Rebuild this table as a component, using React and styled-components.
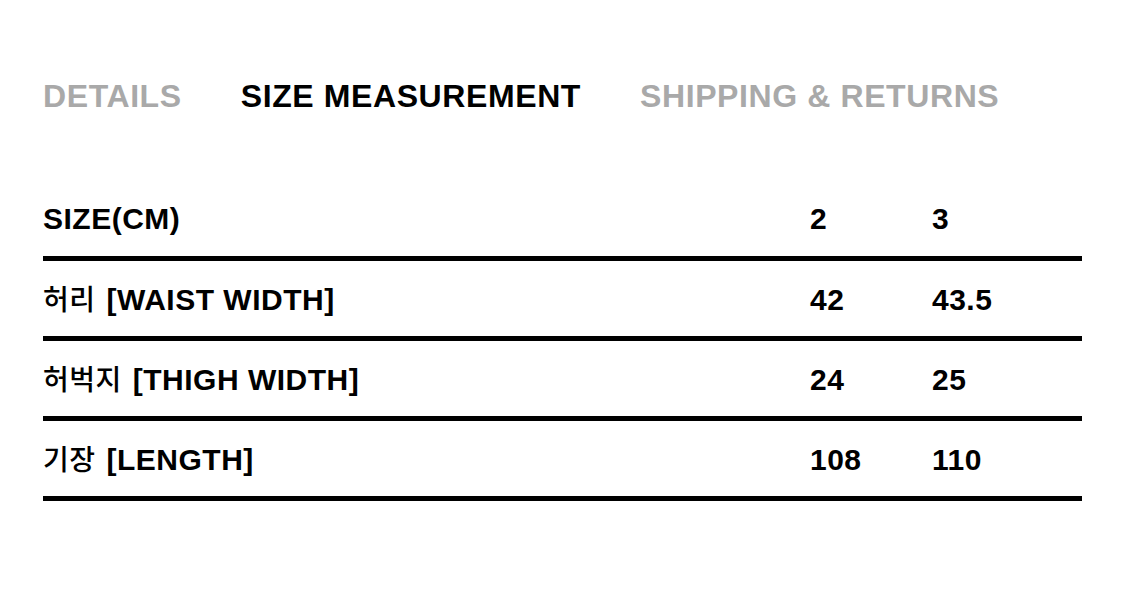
import React from 'react';
import styled, { createGlobalStyle } from 'styled-components';

const GlobalStyle = createGlobalStyle`
  html, body {
    margin: 0;
    padding: 0;
    background: #fff;
  }
  body {
    font-family: 'Liberation Sans', 'Noto Sans CJK KR', Arial, sans-serif;
    color: #000;
  }
`;

const Page = styled.div`
  width: 1039px;
  padding: 76px 0 0 43px;
`;

const Tabs = styled.nav`
  display: flex;
  gap: 59px;
  height: 40px;
  margin-bottom: 65px;
`;

const Tab = styled.span`
  font-size: 32px;
  line-height: 40px;
  font-weight: 700;
  letter-spacing: 0.6px;
  color: ${({ active }) => (active ? '#000' : '#a9a9a9')};
  white-space: nowrap;
`;

const Table = styled.div`
  display: flex;
  flex-direction: column;
`;

const Row = styled.div`
  display: grid;
  grid-template-columns: 767px 122px 1fr;
  height: 75px;
  align-items: center;
  border-bottom: 5px solid #000;
`;

const Cell = styled.span`
  font-family: 'Liberation Sans', 'Noto Sans CJK KR', sans-serif;
  font-size: 30px;
  line-height: 75px;
  font-weight: 700;
  letter-spacing: 0.5px;
  white-space: nowrap;
`;

const Label = styled.span`
  font-family: 'Noto Sans CJK KR', sans-serif;
  font-weight: 500;
  font-size: 28px;
  letter-spacing: 0.5px;
  margin-right: 11px;
`;

const rows = [
  { ko: '허리', en: '[WAIST WIDTH]', values: ['42', '43.5'] },
  { ko: '허벅지', en: '[THIGH WIDTH]', values: ['24', '25'] },
  { ko: '기장', en: '[LENGTH]', values: ['108', '110'] },
];

const App = () => {
  return (
    <Page>
      <GlobalStyle />
      <Tabs>
        <Tab>DETAILS</Tab>
        <Tab active>SIZE MEASUREMENT</Tab>
        <Tab>SHIPPING &amp; RETURNS</Tab>
      </Tabs>

      <Table>
        <Row>
          <Cell>SIZE(CM)</Cell>
          <Cell>2</Cell>
          <Cell>3</Cell>
        </Row>
        {rows.map((row) => (
          <Row key={row.en}>
            <Cell>
              <Label>{row.ko}</Label>
              {row.en}
            </Cell>
            {row.values.map((v) => (
              <Cell key={v}>{v}</Cell>
            ))}
          </Row>
        ))}
      </Table>
    </Page>
  );
};

export default App;
